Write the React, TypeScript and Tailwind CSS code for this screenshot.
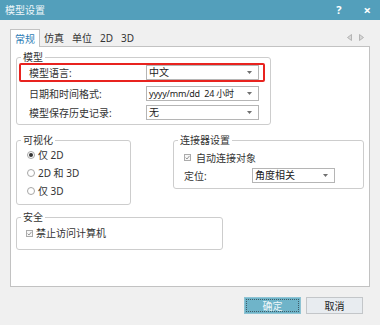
import React from "react";

function Caret() {
  return (
    <svg width="5" height="3" viewBox="0 0 5 3" className="shrink-0">
      <path d="M0 0h5L2.5 3z" fill="#707070" />
    </svg>
  );
}

function Select(props: { value: string; className: string; valueClass?: string }) {
  return (
    <div
      className={`flex h-[15px] items-center justify-between border border-[#b5b5b5] bg-white pl-[2px] pr-[6px] ${props.className}`}
    >
      <span className={props.valueClass ?? "text-[10px] leading-[13px] text-[#222]"}>{props.value}</span>
      <Caret />
    </div>
  );
}

function Group(props: { title: string; className: string; children: React.ReactNode }) {
  return (
    <fieldset className={`rounded-[3px] border border-[#cdcdcd] ${props.className}`}>
      <legend className="ml-[4px] px-[2px] text-[10px] leading-[12px] text-[#333]">{props.title}</legend>
      {props.children}
    </fieldset>
  );
}

function Radio(props: { label: React.ReactNode; checked?: boolean }) {
  return (
    <div className="flex h-[18px] items-center gap-[3px] pl-[10px]">
      <span className="flex h-[8px] w-[8px] items-center justify-center rounded-full border border-[#a6a6a6] bg-white">
        {props.checked ? <span className="h-[4px] w-[4px] rounded-full bg-[#333]" /> : null}
      </span>
      <span className="text-[10px] leading-[12px] text-[#333]">{props.label}</span>
    </div>
  );
}

function Check() {
  return (
    <span className="flex h-[7px] w-[7px] items-center justify-center border border-[#ababab] bg-[#f7f7f7]">
      <svg width="5" height="5" viewBox="0 0 5 5">
        <path d="M0.6 2.6L2 4L4.5 0.9" stroke="#8c8c8c" strokeWidth="0.9" fill="none" />
      </svg>
    </span>
  );
}

function Arrow(props: { dir: "left" | "right" }) {
  return (
    <svg width="5" height="7" viewBox="0 0 5 7">
      {props.dir === "left" ? (
        <path d="M4.5 0.5v6L0.5 3.5z" fill="#d8d8d8" stroke="#a8a8a8" strokeWidth="0.8" />
      ) : (
        <path d="M0.5 0.5v6L4.5 3.5z" fill="#d8d8d8" stroke="#a8a8a8" strokeWidth="0.8" />
      )}
    </svg>
  );
}

export default function App() {
  const tabs = ["仿真", "单位", "2D", "3D"];

  return (
    <div className="flex h-[325px] w-[380px] flex-col overflow-hidden bg-[#f0f0f0] font-['Noto_Sans','Noto_Sans_CJK_SC',sans-serif]">
      {/* title bar */}
      <div className="flex h-[20px] shrink-0 items-center bg-[#539fbb] pl-[5px] text-[#eef6f9]">
        <span className="text-[10px] leading-[12px]">模型设置</span>
        <span className="ml-auto text-[11px] font-bold leading-[12px] text-white">?</span>
        <span className="ml-[22px] mr-[9px] text-[13px] font-bold leading-[12px] text-white">×</span>
      </div>

      <div className="px-[10px] pt-[9px]">
        {/* tabs */}
        <div className="flex items-start">
          <div className="relative z-10 -mb-px flex h-[18px] items-center border border-b-0 border-[#c2c2c2] bg-white pl-[4px] pr-[4px]">
            <span className="text-[10px] leading-[12px] text-[#2e7db5]">常规</span>
          </div>
          {tabs.map((t) => (
            <div key={t} className="flex h-[17px] items-center px-[4px]">
              <span className="text-[10px] leading-[12px] text-[#333]">{t}</span>
            </div>
          ))}
          <div className="ml-auto mr-[6px] flex h-[17px] items-center gap-[7px]">
            <Arrow dir="left" />
            <Arrow dir="right" />
          </div>
        </div>

        {/* pane */}
        <div className="flex h-[241px] flex-col border border-[#c2c2c2] bg-white px-[5px] pt-[4px]">
          <Group title="模型" className="w-[255px] pb-[4px]">
            <div className="ml-[2px] flex h-[19px] w-[246px] items-center rounded-[2px] border-2 border-[#e8231f] pl-[8px]">
              <span className="w-[117px] text-[10px] leading-[12px] text-[#333]">模型语言:</span>
              <Select value="中文" className="w-[113px]" />
            </div>
            <div className="mt-[4px] flex items-center pl-[12px]">
              <span className="w-[117px] text-[10px] leading-[12px] text-[#333]">日期和时间格式:</span>
              <Select
                value="yyyy/mm/dd  24 小时"
                className="w-[113px]"
                valueClass="whitespace-pre text-[9px] leading-[12px] tracking-[-0.2px] text-[#222]"
              />
            </div>
            <div className="mt-[4px] flex items-center pl-[12px]">
              <span className="w-[117px] text-[10px] leading-[12px] text-[#333]">模型保存历史记录:</span>
              <Select value="无" className="w-[113px]" />
            </div>
          </Group>

          <div className="mt-[9px] flex items-start justify-between">
            <Group title="可视化" className="w-[115px] pb-[4px]">
              <Radio label="仅 2D" checked />
              <Radio label="2D 和 3D" />
              <Radio label="仅 3D" />
            </Group>

            <Group title="连接器设置" className="w-[191px] pb-[5px] pt-[3px]">
              <div className="flex h-[17px] items-center gap-[5px] pl-[10px]">
                <Check />
                <span className="text-[10px] leading-[12px] text-[#333]">自动连接对象</span>
              </div>
              <div className="mt-[2px] flex items-center pl-[10px]">
                <span className="w-[68px] text-[10px] leading-[12px] text-[#333]">定位:</span>
                <Select value="角度相关" className="w-[83px]" />
              </div>
            </Group>
          </div>

          <Group title="安全" className="mt-[6px] w-[207px] pb-[7px]">
            <div className="mt-[1px] flex h-[18px] items-center gap-[3px] pl-[9px]">
              <Check />
              <span className="text-[10px] leading-[12px] text-[#333]">禁止访问计算机</span>
            </div>
          </Group>
        </div>
      </div>

      {/* buttons */}
      <div className="mt-[10px] flex justify-end gap-[5px] pr-[17px]">
        <button className="flex h-[17px] w-[57px] items-stretch border border-[#8ec3d3] bg-[#6fb4c9] p-[1px]">
          <span className="flex flex-1 items-center justify-center border border-dotted border-[#3f5d68] text-[10px] leading-[12px] text-[#eef7fa]">
            确定
          </span>
        </button>
        <button className="flex h-[17px] w-[57px] items-center justify-center border border-[#c3c6c9] bg-[#e8ecf0] text-[10px] leading-[12px] text-[#222]">
          取消
        </button>
      </div>
    </div>
  );
}
